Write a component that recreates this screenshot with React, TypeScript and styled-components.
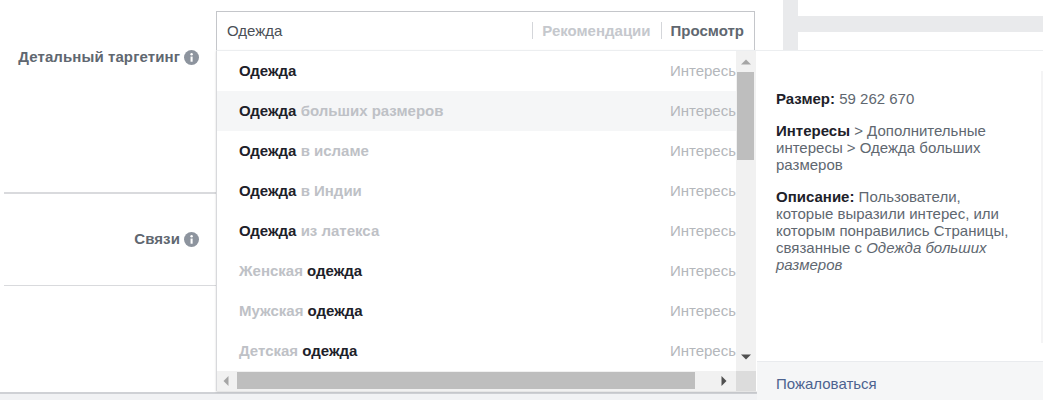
import React from "react";
import styled, { createGlobalStyle } from "styled-components";

const Global = createGlobalStyle`
  html, body { margin: 0; padding: 0; background: #fff; overflow: hidden; }
  body { font-family: "Liberation Sans", Arial, sans-serif; font-size: 15px; }
`;

const Page = styled.div`
  position: relative;
  width: 1043px;
  height: 400px;
  display: flex;
  background: #f1f2f4;
  overflow: hidden;
`;
const Main = styled.div`
  width: 783px;
  height: 392px;
  background: #fff;
  border-bottom: 2px solid #cfd1d5;
  box-sizing: content-box;
  padding-left: 4px;
  margin-right: -4px;
  display: flex;
  flex-direction: column;
`;
const Row = styled.div<{ $h: number; $top: number; $line: number }>`
  height: ${(p) => p.$h}px;
  box-sizing: border-box;
  padding-top: ${(p) => p.$top}px;
  border-bottom: ${(p) => p.$line}px solid #d9dadd;
  flex: none;
`;
const LabelCell = styled.div`
  width: 195px;
  display: flex;
  justify-content: flex-end;
  align-items: center;
  gap: 4px;
  font-size: 15px;
  line-height: 16px;
  font-weight: bold;
  letter-spacing: 0.1px;
  color: #606770;
`;
const Info = styled.svg`
  width: 15px;
  height: 15px;
  flex: none;
`;
const Side = styled.div`
  width: 260px;
  height: 50px;
  background: #fff;
  display: flex;
  flex-direction: column;
`;
const Strip = styled.div`
  flex: 1;
  border-left: 15px solid #e9eaec;
  display: flex;
  flex-direction: column;
  padding-top: 16px;
  box-sizing: border-box;
`;
const Band = styled.div`
  height: 16px;
  background: #e9eaec;
`;
const Overlay = styled.div`
  position: absolute;
  left: 216px;
  top: 11px;
  width: 827px;
  height: 389px;
  display: flex;
  flex-direction: column;
`;
const InputBox = styled.div`
  width: 539px;
  height: 39px;
  box-sizing: border-box;
  border: 1px solid #c4c6ca;
  border-bottom: none;
  background: #fff;
  display: flex;
  align-items: center;
  padding: 0 10px 1px 10px;
  font-size: 15px;
  color: #4b4f56;
`;
const Query = styled.span`
  flex: 1;
`;
const Tab = styled.span<{ $active?: boolean }>`
  font-weight: bold;
  font-size: 15px;
  line-height: 17px;
  padding-left: 9px;
  margin-left: 10px;
  border-left: 1px solid #d4d6da;
  color: ${(p) => (p.$active ? "#606770" : "#c5c8cd")};
`;
const Popup = styled.div`
  flex: 1;
  display: flex;
  min-height: 0;
`;
const ListBox = styled.div`
  position: relative;
  width: 541px;
  height: 341px;
  box-sizing: border-box;
  background: #fff;
  border-left: 1px solid #d8d9dc;
  border-top: 1px solid #eceef0;
  box-shadow: 0 1px 2px rgba(0, 0, 0, 0.15);
  padding-right: 21px;
  display: flex;
  flex-direction: column;
  overflow: hidden;
`;
const Item = styled.div<{ $hover?: boolean }>`
  height: 40px;
  flex: none;
  box-sizing: border-box;
  display: flex;
  align-items: center;
  justify-content: space-between;
  padding: 0 0 2px 22px;
  background: ${(p) => (p.$hover ? "#f5f6f7" : "#fff")};
  white-space: nowrap;
`;
const Name = styled.span`
  font-size: 15px;
  font-weight: bold;
  color: #bec1c6;
`;
const Strong = styled.b`
  color: #1d2129;
`;
const Kind = styled.span`
  font-size: 15px;
  color: #b4b7bb;
  margin-right: -3px;
`;
const VTrack = styled.div`
  position: absolute;
  right: 1px;
  top: 0;
  width: 20px;
  height: 320px;
  background: #f1f1f1;
`;
const VThumb = styled.div`
  position: absolute;
  left: 1px;
  top: 21px;
  width: 17px;
  height: 88px;
  background: #bebebe;
`;
const HTrack = styled.div`
  position: absolute;
  left: 0;
  bottom: 0;
  width: 519px;
  height: 20px;
  background: #f1f1f1;
`;
const HThumb = styled.div`
  position: absolute;
  left: 20px;
  top: 1px;
  width: 458px;
  height: 17px;
  background: #bebebe;
`;
const Corner = styled.div`
  position: absolute;
  right: 1px;
  bottom: 0;
  width: 20px;
  height: 20px;
  background: #dcdcdc;
`;
const Arrow = styled.svg<{ $x: number; $y: number }>`
  position: absolute;
  left: ${(p) => p.$x}px;
  top: ${(p) => p.$y}px;
  width: 10px;
  height: 10px;
`;
const Details = styled.div`
  position: relative;
  width: 286px;
  height: 350px;
  background: #fff;
  border-top: 1px solid #eceef0;
  box-sizing: border-box;
  display: flex;
  flex-direction: column;
  &::after {
    content: "";
    position: absolute;
    right: 0;
    top: 20px;
    bottom: 57px;
    width: 2px;
    background: #f4f4f5;
  }
`;
const DetailBody = styled.div`
  flex: 1;
  padding: 39px 30px 0 19px;
  font-size: 15px;
  line-height: 17px;
  color: #606770;
`;
const Para = styled.p`
  margin: 0 0 15px;
  b { color: #1d2129; }
`;
const Foot = styled.div`
  height: 39px;
  box-sizing: border-box;
  background: #f5f6f7;
  border-top: 1px solid #e9ebee;
  padding: 13px 0 0 19px;
  font-size: 15px;
  line-height: 17px;
  color: #4d6390;
`;

const InfoIcon = () => (
  <Info viewBox="0 0 16 16">
    <circle cx="8" cy="8" r="8" fill="#8d949e" />
    <rect x="7" y="7" width="2.2" height="5.5" fill="#fff" />
    <circle cx="8.1" cy="4.6" r="1.3" fill="#fff" />
  </Info>
);

const items: [React.ReactNode, boolean?][] = [
  [<Strong>Одежда</Strong>],
  [<><Strong>Одежда</Strong> больших размеров</>, true],
  [<><Strong>Одежда</Strong> в исламе</>],
  [<><Strong>Одежда</Strong> в Индии</>],
  [<><Strong>Одежда</Strong> из латекса</>],
  [<>Женская <Strong>одежда</Strong></>],
  [<>Мужская <Strong>одежда</Strong></>],
  [<>Детская <Strong>одежда</Strong></>],
];

export default function App() {
  return (
    <Page>
      <Global />
      <Main>
        <Row $h={194} $top={49} $line={2}>
          <LabelCell>
            Детальный таргетинг <InfoIcon />
          </LabelCell>
        </Row>
        <Row $h={92} $top={37} $line={1}>
          <LabelCell>
            Связи <InfoIcon />
          </LabelCell>
        </Row>
      </Main>
      <Side>
        <Strip>
          <Band />
        </Strip>
      </Side>
      <Overlay>
        <InputBox>
          <Query>Одежда</Query>
          <Tab>Рекомендации</Tab>
          <Tab $active>Просмотр</Tab>
        </InputBox>
        <Popup>
          <ListBox>
            {items.map(([n, h], i) => (
              <Item key={i} $hover={h}>
                <Name>{n}</Name>
                <Kind>Интересы</Kind>
              </Item>
            ))}
            <VTrack>
              <VThumb />
              <Arrow $x={5} $y={6} viewBox="0 0 10 10">
                <path d="M0 7.5 L5 2.5 L10 7.5 Z" fill="#a5a5a5" />
              </Arrow>
              <Arrow $x={5} $y={301} viewBox="0 0 10 10">
                <path d="M0 2.5 L5 7.5 L10 2.5 Z" fill="#505050" />
              </Arrow>
            </VTrack>
            <HTrack>
              <HThumb />
              <Arrow $x={4} $y={5} viewBox="0 0 10 10">
                <path d="M7.5 0 L2.5 5 L7.5 10 Z" fill="#a5a5a5" />
              </Arrow>
              <Arrow $x={502} $y={5} viewBox="0 0 10 10">
                <path d="M2.5 0 L7.5 5 L2.5 10 Z" fill="#505050" />
              </Arrow>
            </HTrack>
            <Corner />
          </ListBox>
          <Details>
            <DetailBody>
              <Para><b>Размер:</b> 59 262 670</Para>
              <Para><b>Интересы</b> &gt; Дополнительные интересы &gt; Одежда больших размеров</Para>
              <Para><b>Описание:</b> Пользователи, которые выразили интерес, или которым понравились Страницы, связанные с <i>Одежда больших размеров</i></Para>
            </DetailBody>
            <Foot>Пожаловаться</Foot>
          </Details>
        </Popup>
      </Overlay>
    </Page>
  );
}
